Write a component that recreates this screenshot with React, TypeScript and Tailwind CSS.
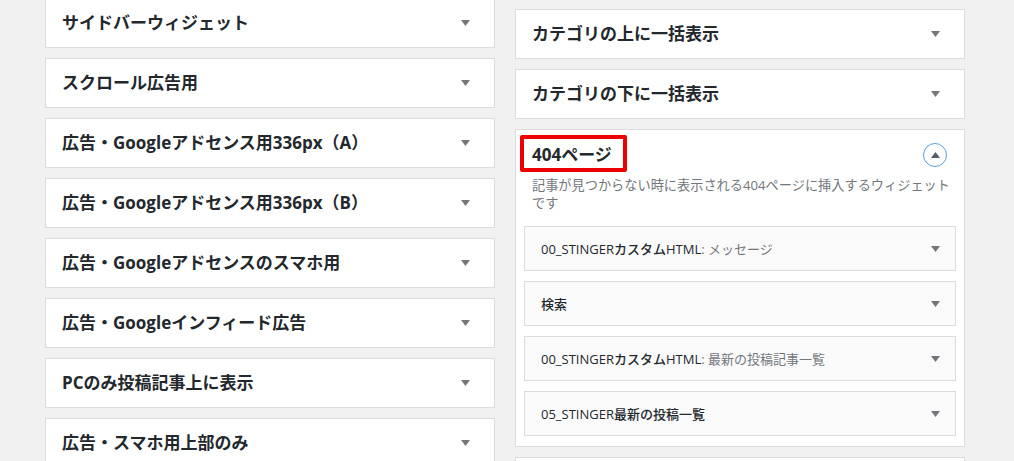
import React from "react";

const Arrow = ({ up = false, color = "#72777c" }: { up?: boolean; color?: string }) => (
  <svg width="9" height="6" viewBox="0 0 9 6" className="block">
    {up ? <polygon points="0,6 9,6 4.5,0" fill={color} /> : <polygon points="0,0 9,0 4.5,6" fill={color} />}
  </svg>
);

const Card = ({ title }: { title: string }) => (
  <div className="h-[50px] shrink-0 bg-white border border-[#dcdcdc] flex items-center justify-between pl-[16px] pr-[17px]">
    <span className="text-[17px] font-bold text-[#23282d] leading-[24px] whitespace-nowrap">{title}</span>
    <span className="w-[24px] flex justify-center">
      <Arrow />
    </span>
  </div>
);

const Inner = ({ name, sub }: { name: string; sub?: string }) => (
  <div className="h-[45px] shrink-0 bg-[#fafafa] border border-[#dcdcdc] flex items-center justify-between pl-[16px] pr-[8px]">
    <span className="text-[13px] leading-[18px] whitespace-nowrap text-[#23282d]">
      <span className="font-medium">{name}</span>
      {sub && <span className="font-normal text-[#72777c]">{sub}</span>}
    </span>
    <span className="w-[24px] flex justify-center">
      <Arrow />
    </span>
  </div>
);

export default function App() {
  const left = [
    "サイドバーウィジェット",
    "スクロール広告用",
    "広告・Googleアドセンス用336px（A）",
    "広告・Googleアドセンス用336px（B）",
    "広告・Googleアドセンスのスマホ用",
    "広告・Googleインフィード広告",
    "PCのみ投稿記事上に表示",
    "広告・スマホ用上部のみ",
  ];
  return (
    <div className="h-[461px] overflow-hidden bg-[#f1f1f1] flex gap-[20px] pl-[45px] font-['Open_Sans','Noto_Sans_CJK_JP',sans-serif]">
      <div className="w-[450px] flex flex-col gap-[10px] mt-[-2px]">
        {left.map((t) => (
          <Card key={t} title={t} />
        ))}
      </div>
      <div className="w-[450px] flex flex-col gap-[10px] pt-[9px]">
        <Card title="カテゴリの上に一括表示" />
        <Card title="カテゴリの下に一括表示" />
        <div className="shrink-0 bg-white border border-[#dcdcdc] flex flex-col">
          <div className="flex items-center justify-between pl-[16px] pr-[17px] pt-[13px]">
            <span className="relative text-[17px] font-bold text-[#23282d] leading-[24px] whitespace-nowrap">
              404ページ
              <span className="absolute left-[-12px] top-[-8px] w-[107px] h-[37px] border-[4px] border-[#ee0000] rounded-[2px]" />
            </span>
            <span className="w-[24px] h-[24px] rounded-full border-[1.5px] border-[#5b9dd9] flex items-center justify-center">
              <Arrow up color="#555d66" />
            </span>
          </div>
          <p className="mt-[9px] px-[16px] text-[13.2px] leading-[18px] text-[#72777c] whitespace-nowrap">
            記事が見つからない時に表示される404ページに挿入するウィジェット
            <br />
            です
          </p>
          <div className="mt-[14px] px-[8px] pb-[10px] flex flex-col gap-[10px]">
            <Inner name="00_STINGERカスタムHTML" sub=": メッセージ" />
            <Inner name="検索" />
            <Inner name="00_STINGERカスタムHTML" sub=": 最新の投稿記事一覧" />
            <Inner name="05_STINGER最新の投稿一覧" />
          </div>
        </div>
        <Card title="" />
      </div>
    </div>
  );
}
